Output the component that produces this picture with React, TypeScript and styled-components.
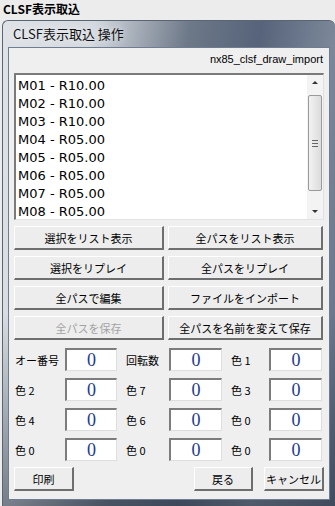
import React from "react";
import styled, { createGlobalStyle } from "styled-components";

const GlobalStyle = createGlobalStyle`
  html, body {
    margin: 0;
    padding: 0;
    background: #ececec;
  }
  body {
    width: 335px;
    height: 506px;
    overflow: hidden;
    font-family: "Noto Sans CJK JP", "Liberation Sans", sans-serif;
  }
`;

const items = [
  "M01 - R10.00",
  "M02 - R10.00",
  "M03 - R10.00",
  "M04 - R05.00",
  "M05 - R05.00",
  "M06 - R05.00",
  "M07 - R05.00",
  "M08 - R05.00",
];

const actions = [
  { label: "選択をリスト表示" },
  { label: "全パスをリスト表示" },
  { label: "選択をリプレイ" },
  { label: "全パスをリプレイ" },
  { label: "全パスで編集" },
  { label: "ファイルをインポート" },
  { label: "全パスを保存", disabled: true },
  { label: "全パスを名前を変えて保存" },
];

const fields = [
  ["オー番号", "回転数", "色 1"],
  ["色 2", "色 7", "色 3"],
  ["色 4", "色 6", "色 0"],
  ["色 0", "色 0", "色 0"],
];

const App: React.FC = () => {
  return (
    <Page>
      <GlobalStyle />
      <AppTitle>CLSF表示取込</AppTitle>
      <Window>
        <WindowTitle>CLSF表示取込 操作</WindowTitle>
        <Client>
          <PathLabel>nx85_clsf_draw_import</PathLabel>
          <ListBox>
            <ListItems>
              {items.map((it) => (
                <ListItem key={it}>{it}</ListItem>
              ))}
            </ListItems>
            <ScrollBar>
              <ArrowUp />
              <Thumb>
                <Grip />
              </Thumb>
              <ArrowDown />
            </ScrollBar>
          </ListBox>

          <ActionGrid>
            {actions.map((a) => (
              <Button key={a.label} $disabled={a.disabled}>
                {a.label}
              </Button>
            ))}
          </ActionGrid>

          <FieldGrid>
            {fields.map((row, r) =>
              row.map((label, c) => (
                <React.Fragment key={`${r}-${c}`}>
                  <FieldLabel $first={c === 0}>{label}</FieldLabel>
                  <NumberBox>0</NumberBox>
                </React.Fragment>
              ))
            )}
          </FieldGrid>

          <Footer>
            <Button $width={60}>印刷</Button>
            <Spacer />
            <Button $width={59}>戻る</Button>
            <Button $width={60}>キャンセル</Button>
          </Footer>
        </Client>
      </Window>
    </Page>
  );
};

export default App;

const Page = styled.div`
  width: 335px;
  height: 506px;
  display: flex;
  flex-direction: column;
  background: #ececec;
`;

const AppTitle = styled.div`
  height: 20px;
  padding-left: 3px;
  font-size: 12px;
  font-weight: bold;
  line-height: 18px;
  color: #000;
`;

const Window = styled.div`
  flex: 1;
  margin-left: 2px;
  display: flex;
  flex-direction: column;
  padding: 0 5px 6px 5px;
  border-radius: 6px 6px 0 0;
  border: 1px solid #5a6574;
  border-bottom: none;
  border-right: none;
  background:
    linear-gradient(to bottom, rgba(255, 255, 255, 0) 60%, rgba(40, 50, 65, 0.55) 100%),
    linear-gradient(100deg, #dfe3e8 0%, #d4d9df 22%, #6d7888 45%, #56637a 62%, #7c8899 80%, #5e6b80 100%);
`;

const WindowTitle = styled.div`
  height: 26px;
  padding-left: 5px;
  font-size: 13px;
  line-height: 26px;
  color: #111;
  text-shadow: 0 0 6px rgba(255, 255, 255, 0.9);
`;

const Client = styled.div`
  flex: 1;
  display: flex;
  flex-direction: column;
  padding: 0 5px 6px 5px;
  background: #efefef;
  border: 1px solid #6f7d92;
`;

const PathLabel = styled.div`
  height: 25px;
  padding-right: 1px;
  text-align: right;
  font-family: "Liberation Sans", Arial, sans-serif;
  font-size: 11px;
  line-height: 22px;
  color: #000;
`;

const ListBox = styled.div`
  height: 147px;
  display: flex;
  background: #fff;
  border-top: 2px solid #7a7a7a;
  border-left: 2px solid #7a7a7a;
  border-right: 1px solid #e2e2e2;
  border-bottom: 1px solid #e2e2e2;
  box-sizing: border-box;
`;

const ListItems = styled.div`
  flex: 1;
  padding: 2px 0 0 2px;
`;

const ListItem = styled.div`
  height: 18px;
  font-family: "DejaVu Sans", sans-serif;
  font-size: 13px;
  line-height: 17px;
  color: #000;
`;

const ScrollBar = styled.div`
  width: 16px;
  display: flex;
  flex-direction: column;
  align-items: center;
  background: #f3f3f3;
`;

const ArrowUp = styled.div`
  margin: 6px 0 5px;
  width: 0;
  height: 0;
  border-left: 3px solid transparent;
  border-right: 3px solid transparent;
  border-bottom: 3px solid #333;
`;

const ArrowDown = styled.div`
  margin: auto 0 6px;
  width: 0;
  height: 0;
  border-left: 3px solid transparent;
  border-right: 3px solid transparent;
  border-top: 3px solid #333;
`;

const Thumb = styled.div`
  margin-top: 6px;
  width: 14px;
  height: 96px;
  box-sizing: border-box;
  border: 1px solid #9a9a9a;
  border-radius: 2px;
  background: linear-gradient(to right, #f2f2f2, #dcdcdc);
  display: flex;
  align-items: center;
  justify-content: center;
`;

const Grip = styled.div`
  width: 6px;
  height: 5px;
  border-top: 1px solid #666;
  border-bottom: 1px solid #666;
  position: relative;
  &::after {
    content: "";
    position: absolute;
    left: 0;
    right: 0;
    top: 2px;
    border-top: 1px solid #666;
  }
`;

const ActionGrid = styled.div`
  margin-top: 6px;
  display: grid;
  grid-template-columns: 150px 155px;
  column-gap: 4px;
  row-gap: 6px;
`;

const Button = styled.div<{ $disabled?: boolean; $width?: number }>`
  height: 24px;
  ${(p) => (p.$width ? `width: ${p.$width}px;` : "")}
  box-sizing: border-box;
  display: flex;
  align-items: center;
  justify-content: center;
  font-size: 11px;
  color: ${(p) => (p.$disabled ? "#a3a3a3" : "#000")};
  background: #ededed;
  border-top: 1px solid #ffffff;
  border-left: 1px solid #ffffff;
  border-right: 2px solid #6e6e6e;
  border-bottom: 2px solid #6e6e6e;
  white-space: nowrap;
`;

const FieldGrid = styled.div`
  margin-top: 8px;
  display: grid;
  grid-template-columns: 51px 52px 52px 53px 47px 53px;
  grid-auto-rows: 23px;
  row-gap: 7px;
`;

const FieldLabel = styled.div<{ $first?: boolean }>`
  display: flex;
  align-items: center;
  padding-left: ${(p) => (p.$first ? 1 : 9)}px;
  font-size: 11px;
  color: #000;
  white-space: nowrap;
`;

const NumberBox = styled.div`
  box-sizing: border-box;
  display: flex;
  align-items: center;
  justify-content: center;
  background: #fff;
  border-top: 2px solid #7c7c7c;
  border-left: 2px solid #7c7c7c;
  border-right: 1px solid #dedede;
  border-bottom: 1px solid #dedede;
  font-family: "Liberation Serif", serif;
  font-size: 18px;
  color: #1b3a8c;
`;

const Footer = styled.div`
  margin-top: 6px;
  display: flex;
  gap: 11px;
  & > :first-child {
    margin-right: -11px;
  }
`;

const Spacer = styled.div`
  flex: 1;
`;
